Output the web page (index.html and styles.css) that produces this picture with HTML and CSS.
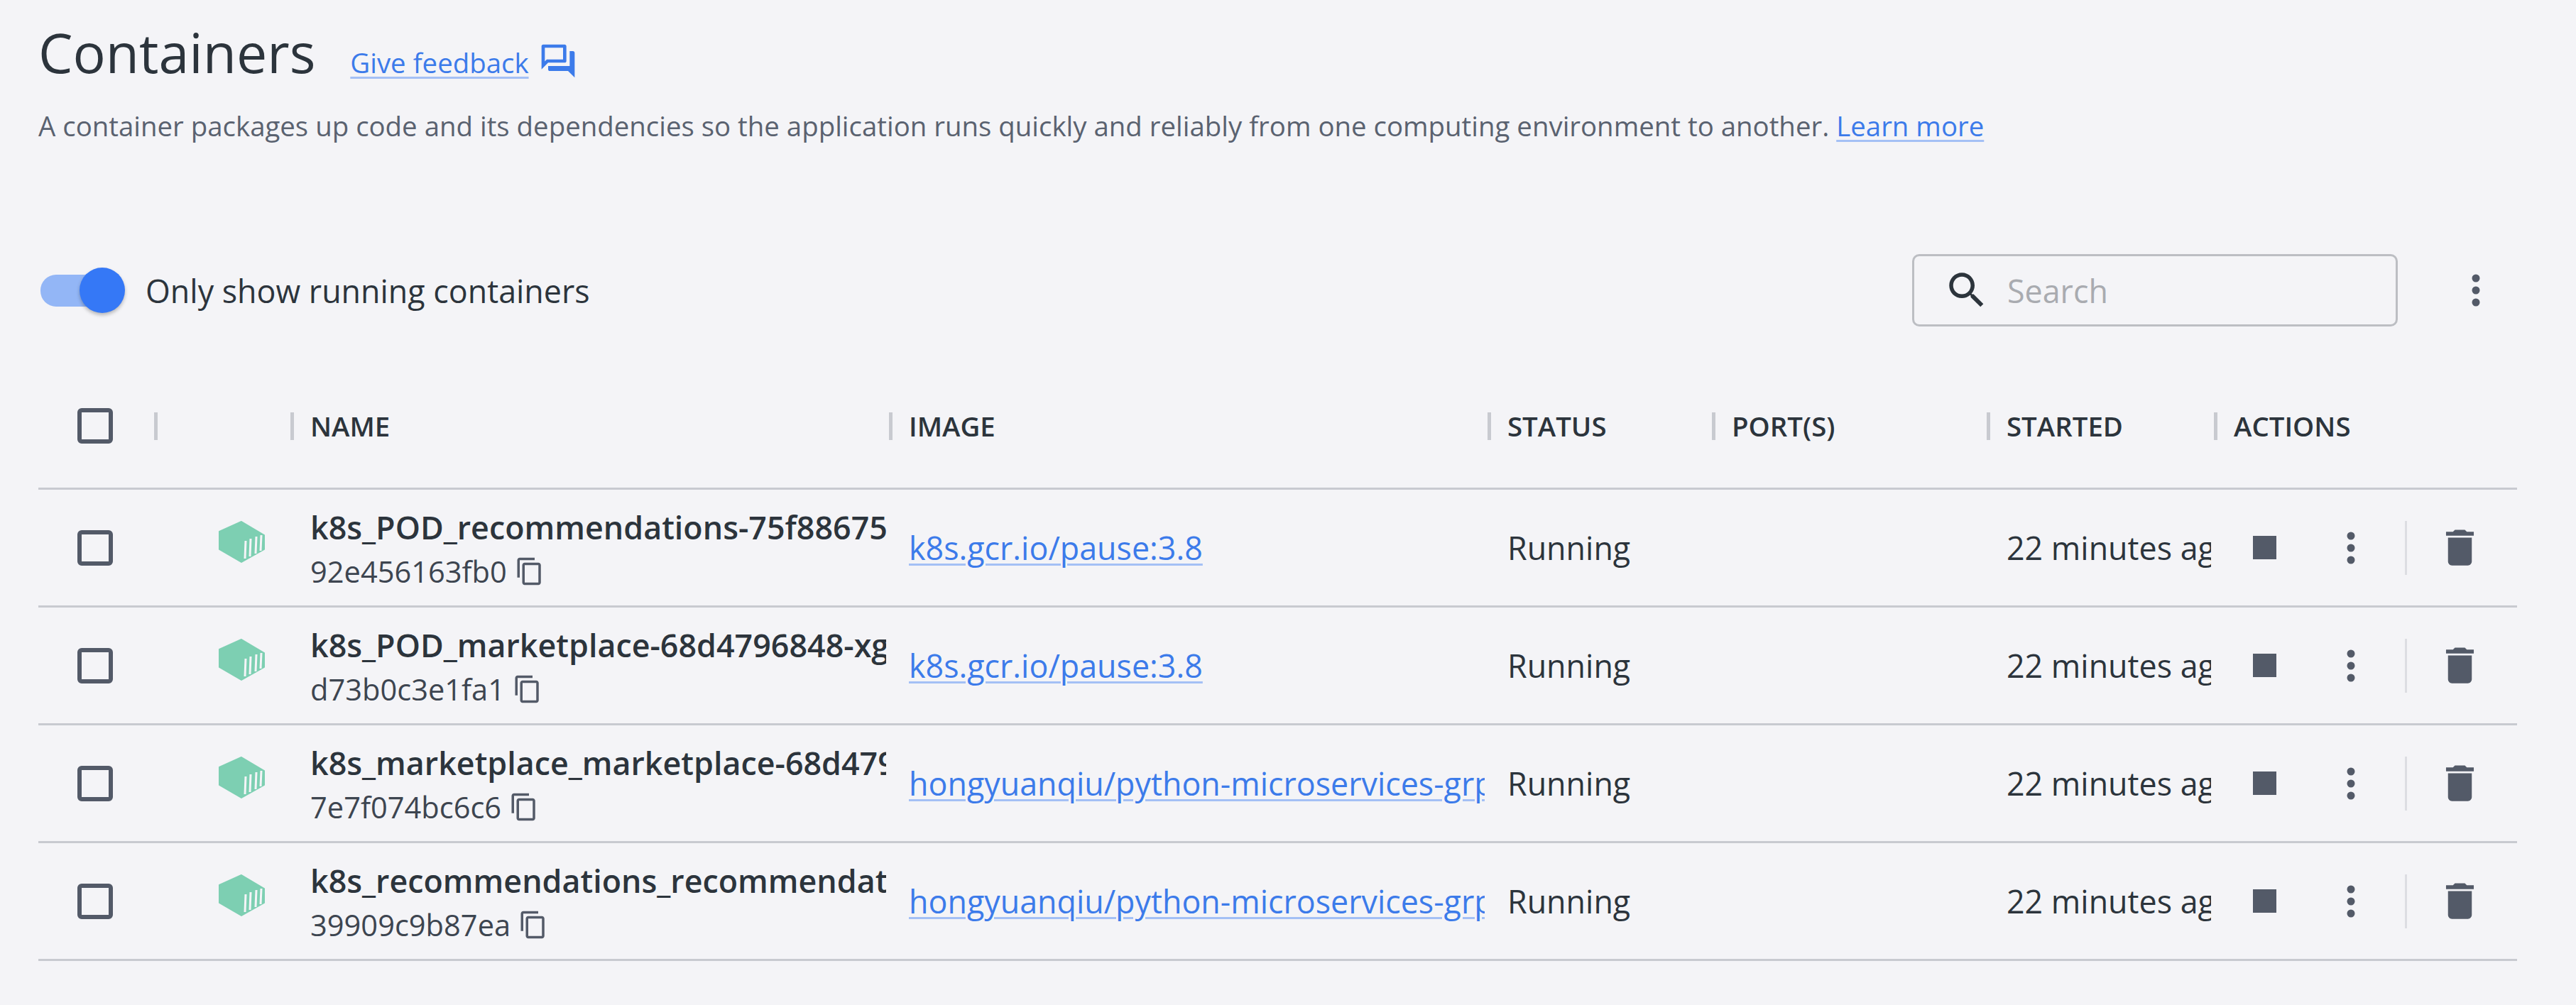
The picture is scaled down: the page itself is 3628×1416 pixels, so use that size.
FILE: index.html
```html
<!DOCTYPE html>
<html>
<head>
    <title>Containers</title>
    <link rel="stylesheet" href="styles.css">
</head>
<body>
    <svg class="defs">
        <symbol id="i-copy" viewBox="0 0 24 24"><path d="M16 1H4c-1.1 0-2 .9-2 2v14h2V3h12V1zm3 4H8c-1.1 0-2 .9-2 2v14c0 1.1.9 2 2 2h11c1.1 0 2-.9 2-2V7c0-1.1-.9-2-2-2zm0 16H8V7h11v14z"/></symbol>
        <symbol id="i-trash" viewBox="0 0 24 24"><path d="M6 19c0 1.1.9 2 2 2h8c1.1 0 2-.9 2-2V7H6v12zM19 4h-3.5l-1-1h-5l-1 1H5v2h14V4z"/></symbol>
        <symbol id="i-more" viewBox="0 0 12 46"><circle cx="6" cy="6" r="5.5"/><circle cx="6" cy="23" r="5.5"/><circle cx="6" cy="40" r="5.5"/></symbol>
        <symbol id="i-box" viewBox="0 0 65 59">
            <path class="box-body" d="M32 1 64 20V40L32 58 1 40V15Z"/>
            <path class="box-bars" d="M38 28 37 53M45 25 44 50M53 22 52 46M60 20 59 42"/>
        </symbol>
    </svg>

    <div class="page">
        <div class="title-row">
            <h1>Containers</h1>
            <a class="link" href="#">Give feedback</a>
            <svg class="feedback-icon" viewBox="0 0 24 24"><path d="M15 4v7H5.17L4 12.17V4h11m1-2H3c-.55 0-1 .45-1 1v14l4-4h10c.55 0 1-.45 1-1V3c0-.55-.45-1-1-1zm5 4h-2v9H6v2c0 .55.45 1 1 1h11l4 4V7c0-.55-.45-1-1-1z"/></svg>
        </div>
        <p class="desc">A container packages up code and its dependencies so the application runs quickly and reliably from one computing environment to another. <a class="link" href="#">Learn more</a></p>

        <div class="toolbar">
            <div class="toggle"><span class="track"></span><span class="knob"></span></div>
            <span class="toggle-label">Only show running containers</span>
            <div class="search">
                <svg class="search-icon" viewBox="0 0 24 24"><path d="M15.5 14h-.79l-.28-.27C15.41 12.59 16 11.11 16 9.5 16 5.91 13.09 3 9.5 3S3 5.91 3 9.5 5.91 16 9.5 16c1.61 0 3.09-.59 4.23-1.57l.27.28v.79l5 4.99L20.49 19l-4.99-5zm-6 0C7.01 14 5 11.99 5 9.5S7.01 5 9.5 5 14 7.01 14 9.5 11.99 14 9.5 14z"/></svg>
                <span class="placeholder">Search</span>
            </div>
            <svg class="more top-more"><use href="#i-more"/></svg>
        </div>

        <div class="row head">
            <div class="cell"><span class="check"></span></div>
            <div class="cell th"></div>
            <div class="cell th">NAME</div>
            <div class="cell th">IMAGE</div>
            <div class="cell th">STATUS</div>
            <div class="cell th">PORT(S)</div>
            <div class="cell th">STARTED</div>
            <div class="cell th">ACTIONS</div>
        </div>

        <div class="row">
            <div class="cell"><span class="check"></span></div>
            <div class="cell box-cell"><svg class="box"><use href="#i-box"/></svg></div>
            <div class="cell name-cell">
                <div class="name">k8s_POD_recommendations-75f88675c9-7xvqk_default</div>
                <div class="id">92e456163fb0 <svg class="copy"><use href="#i-copy"/></svg></div>
            </div>
            <div class="cell clip"><a class="link" href="#">k8s.gcr.io/pause:3.8</a></div>
            <div class="cell clip">Running</div>
            <div class="cell"></div>
            <div class="cell clip">22 minutes ago</div>
            <div class="cell actions">
                <span class="stop"></span>
                <svg class="more"><use href="#i-more"/></svg>
                <span class="divider"></span>
                <svg class="trash"><use href="#i-trash"/></svg>
            </div>
        </div>

        <div class="row">
            <div class="cell"><span class="check"></span></div>
            <div class="cell box-cell"><svg class="box"><use href="#i-box"/></svg></div>
            <div class="cell name-cell">
                <div class="name">k8s_POD_marketplace-68d4796848-xgq2n_default</div>
                <div class="id">d73b0c3e1fa1 <svg class="copy"><use href="#i-copy"/></svg></div>
            </div>
            <div class="cell clip"><a class="link" href="#">k8s.gcr.io/pause:3.8</a></div>
            <div class="cell clip">Running</div>
            <div class="cell"></div>
            <div class="cell clip">22 minutes ago</div>
            <div class="cell actions">
                <span class="stop"></span>
                <svg class="more"><use href="#i-more"/></svg>
                <span class="divider"></span>
                <svg class="trash"><use href="#i-trash"/></svg>
            </div>
        </div>

        <div class="row">
            <div class="cell"><span class="check"></span></div>
            <div class="cell box-cell"><svg class="box"><use href="#i-box"/></svg></div>
            <div class="cell name-cell">
                <div class="name">k8s_marketplace_marketplace-68d4796848-xgq2n_default</div>
                <div class="id">7e7f074bc6c6 <svg class="copy"><use href="#i-copy"/></svg></div>
            </div>
            <div class="cell clip"><a class="link" href="#">hongyuanqiu/python-microservices-grpc-marketplace</a></div>
            <div class="cell clip">Running</div>
            <div class="cell"></div>
            <div class="cell clip">22 minutes ago</div>
            <div class="cell actions">
                <span class="stop"></span>
                <svg class="more"><use href="#i-more"/></svg>
                <span class="divider"></span>
                <svg class="trash"><use href="#i-trash"/></svg>
            </div>
        </div>

        <div class="row">
            <div class="cell"><span class="check"></span></div>
            <div class="cell box-cell"><svg class="box"><use href="#i-box"/></svg></div>
            <div class="cell name-cell">
                <div class="name">k8s_recommendations_recommendations-75f88675c9-7xvqk_default</div>
                <div class="id">39909c9b87ea <svg class="copy"><use href="#i-copy"/></svg></div>
            </div>
            <div class="cell clip"><a class="link" href="#">hongyuanqiu/python-microservices-grpc-recommendations</a></div>
            <div class="cell clip">Running</div>
            <div class="cell"></div>
            <div class="cell clip">22 minutes ago</div>
            <div class="cell actions">
                <span class="stop"></span>
                <svg class="more"><use href="#i-more"/></svg>
                <span class="divider"></span>
                <svg class="trash"><use href="#i-trash"/></svg>
            </div>
        </div>
    </div>
</body>
</html>
```

FILE: styles.css
```css
html, body { margin: 0; background: #f4f4f7; }
body { font-family: "Open Sans", sans-serif; color: #2c343c; }
.defs { display: none; }
.page { width: 3491px; padding: 0 0 0 54px; }

.link { color: #3c7bea; text-decoration: underline; text-decoration-color: #a4c0f5; text-decoration-thickness: 3px; text-underline-offset: 5px; }

.title-row { display: flex; align-items: baseline; height: 112px; padding-top: 18px; }
h1 { margin: 0; font-size: 77px; font-weight: 400; line-height: 112px; color: #2c343c; }
.title-row .link { margin-left: 49px; font-size: 38.4px; }
.feedback-icon { width: 56px; height: 56px; margin-left: 13px; fill: #3c7bea; align-self: center; margin-top: 24px; }

.desc { margin: 22px 0 0; font-size: 38.4px; line-height: 50px; color: #5a6270; }

.toolbar { display: flex; align-items: center; margin-top: 156px; height: 102px; }
.toggle { position: relative; width: 122px; height: 64px; margin-left: 3px; }
.track { position: absolute; left: 0; top: 10px; width: 105px; height: 45px; border-radius: 22px; background: #93b6f6; }
.knob { position: absolute; right: 3px; top: 0; width: 64px; height: 64px; border-radius: 50%; background: #3578f6; box-shadow: 0 3px 5px rgba(0,0,0,.25); }
.toggle-label { margin-left: 26px; font-size: 44.8px; }

.search { display: flex; align-items: center; box-sizing: border-box; width: 684px; height: 102px; margin-left: auto; border: 3px solid #bcbec3; border-radius: 10px; }
.search-icon { width: 66px; height: 66px; margin-left: 41px; fill: #2c343c; }
.placeholder { margin-left: 24px; font-size: 44.8px; color: #a9abb0; }
.more { width: 12px; height: 46px; fill: #535a68; flex: none; }
.top-more { margin-left: 104px; margin-right: 52px; }

.row { display: grid; grid-template-columns: 163px 192px 843px 843px 316px 387px 320px 427px; box-sizing: border-box; height: 166px; border-bottom: 3px solid #c8cad0; font-size: 44.8px; }
.row.head { margin-top: 53px; height: 177px; font-size: 38.4px; font-weight: 600; }
.cell { display: flex; align-items: center; min-width: 0; }
.cell:first-child { padding-left: 55px; }
.clip, .name-cell { box-sizing: border-box; margin-right: 4px; padding-left: 28px; overflow: hidden; white-space: nowrap; }
.th { padding-left: 0; }
.th::before { content: ""; width: 5px; height: 39px; margin-right: 23px; background: #c8cad0; flex: none; }

.check { box-sizing: border-box; width: 50px; height: 50px; border: 6px solid #535a68; border-radius: 6px; }
.box-cell { padding: 0 0 16px 91px; }
.box { width: 65px; height: 59px; }
.box-body { fill: #7dcfb2; stroke: #7dcfb2; stroke-linejoin: round; stroke-width: 2; }
.box-bars { fill: none; stroke: #f4f4f7; stroke-width: 3; }

.name-cell { display: block; }
.name { margin-top: 25px; line-height: 56px; font-size: 44.8px; font-weight: 600; overflow: hidden; }
.id { display: flex; align-items: center; gap: 11px; margin-top: 9px; font-size: 41.6px; line-height: 50px; color: #3d4550; }
.copy { width: 42px; height: 42px; fill: #535a68; }

.actions { padding-left: 55px; }
.stop { width: 33px; height: 33px; background: #535a68; flex: none; }
.actions .more { margin-left: 99px; }
.divider { width: 3px; height: 76px; margin-left: 70px; background: #dcdde2; flex: none; }
.trash { width: 67px; height: 67px; margin-left: 41px; fill: #535a68; flex: none; }
```
